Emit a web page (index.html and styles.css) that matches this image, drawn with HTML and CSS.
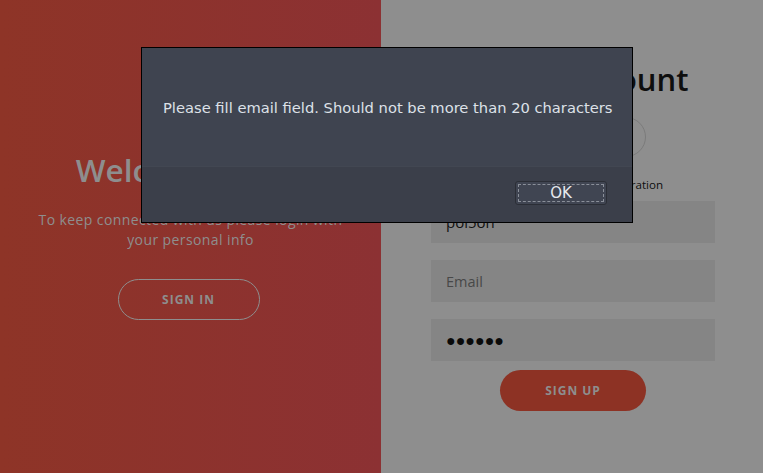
FILE: index.html
```html
<!DOCTYPE html>
<html>
<head>
<meta charset="utf-8">
<link rel="stylesheet" href="styles.css">
</head>
<body>
<div class="page">
  <section class="panel-left">
    <h1 class="welcome">Welcome Back!</h1>
    <p class="lead">To keep connected with us please login with your personal info</p>
    <button class="ghost">SIGN IN</button>
  </section>
  <section class="panel-right">
    <h1 class="create">Create Account</h1>
    <div class="social">
      <span class="circle"><svg width="12" height="14" viewBox="0 0 12 14"><path d="M8 0h2v3H8.5c-.6 0-1 .4-1 1v2H10l-.4 3H7.5v5h-3V9H3V6h1.5V4c0-2 1.2-4 3.5-4z" fill="#1a1a1a"/></svg></span>
      <span class="circle"><svg width="14" height="14" viewBox="0 0 14 14"><text x="2" y="12" font-family="Liberation Sans" font-weight="bold" font-size="13" fill="#1a1a1a">G</text></svg></span>
      <span class="circle"><svg width="14" height="14" viewBox="0 0 14 14"><text x="1" y="12" font-family="Liberation Sans" font-weight="bold" font-size="12" fill="#1a1a1a">in</text></svg></span>
    </div>
    <div class="note">or use your email for registration</div>
    <div class="field value">poi5on</div>
    <div class="field placeholder">Email</div>
    <div class="field dots">&#9679;&#9679;&#9679;&#9679;&#9679;&#9679;</div>
    <button class="primary">SIGN UP</button>
  </section>
</div>
<div class="dialog">
  <div class="dialog-body">Please fill email field. Should not be more than 20 characters</div>
  <div class="dialog-actions">
    <button class="ok"><span class="ok-inner">OK</span></button>
  </div>
</div>
</body>
</html>
```
FILE: styles.css
```css
* { box-sizing: border-box; }
html, body { margin: 0; padding: 0; }
body {
  width: 763px;
  height: 473px;
  overflow: hidden;
  font-family: "Open Sans", "Noto Sans", sans-serif;
  position: relative;
}
.page {
  display: flex;
  width: 763px;
  height: 473px;
}
.panel-left {
  width: 381px;
  background: linear-gradient(to right, #8e3427, #8c3133);
  display: flex;
  flex-direction: column;
  align-items: center;
  padding-top: 147px;
  color: #8e8e8e;
}
.welcome {
  margin: 0;
  font-size: 31.5px;
  font-weight: 600;
  line-height: 46px;
  letter-spacing: 0;
}
.lead {
  margin: 17px 0 0;
  width: 320px;
  text-align: center;
  font-size: 14px;
  line-height: 20px;
  letter-spacing: 0.4px;
}
.ghost {
  margin-top: 29px;
  margin-right: 4px;
  width: 142px;
  height: 41px;
  border: 1px solid #8e8e8e;
  border-radius: 21px;
  background: transparent;
  color: #8e8e8e;
  font-family: inherit;
  font-size: 12px;
  font-weight: 700;
  letter-spacing: 1px;
}
.panel-right {
  flex: 1;
  background: #8e8e8e;
  display: flex;
  flex-direction: column;
  align-items: center;
  padding-top: 55px;
  padding-left: 50px;
  padding-right: 48px;
}
.create {
  margin: 0;
  font-size: 31px;
  font-weight: 600;
  line-height: 48px;
  color: #0e0e0e;
  margin-left: 2px;
}
.social {
  margin-top: 14px;
  display: flex;
  gap: 13px;
}
.circle {
  width: 40px;
  height: 40px;
  border: 1px solid #7b7b7b;
  border-radius: 50%;
  display: flex;
  align-items: center;
  justify-content: center;
}
.note {
  margin-top: 19px;
  font-size: 11.6px;
  line-height: 17px;
  color: #0e0e0e;
  margin-left: 2px;
}
.field {
  width: 100%;
  height: 42px;
  background: #858585;
  padding: 0 15px;
  display: flex;
  align-items: center;
  font-size: 14.5px;
  margin-top: 17px;
}
.field.value { margin-top: 8px; color: #111; font-size: 15px; }
.field.placeholder { color: #484848; }
.field.dots { color: #0a0a0a; font-size: 16px; letter-spacing: 0; }
.primary {
  margin-top: 9px;
  width: 146px;
  height: 41px;
  border: none;
  border-radius: 21px;
  background: #8d3224;
  color: #8e8e8e;
  font-family: inherit;
  font-size: 12px;
  font-weight: 700;
  letter-spacing: 1px;
}
.dialog {
  position: absolute;
  left: 141px;
  top: 47px;
  width: 492px;
  height: 176px;
  border: 1px solid #000;
  background: #3f4450;
  display: flex;
  flex-direction: column;
  font-family: "DejaVu Sans", sans-serif;
}
.dialog-body {
  height: 118px;
  padding: 0 0 0 21px;
  display: flex;
  align-items: center;
  font-size: 14.7px;
  color: #dde1e8;
  white-space: nowrap;
}
.dialog-actions {
  flex: 1;
  background: #3b3f4a;
  border-top: 1px solid #424752;
  display: flex;
  justify-content: flex-end;
  align-items: flex-start;
  padding: 14px 25px 0 0;
}
.ok {
  width: 92px;
  height: 24px;
  padding: 2px;
  border: 1px solid #2b2e36;
  border-radius: 3px;
  background: #404552;
  font-family: "DejaVu Sans", sans-serif;
  display: flex;
}
.ok-inner {
  flex: 1;
  border: 1px dashed #8a8f99;
  color: #e6e9ee;
  font-size: 15px;
  line-height: 16px;
  text-align: center;
}
```
